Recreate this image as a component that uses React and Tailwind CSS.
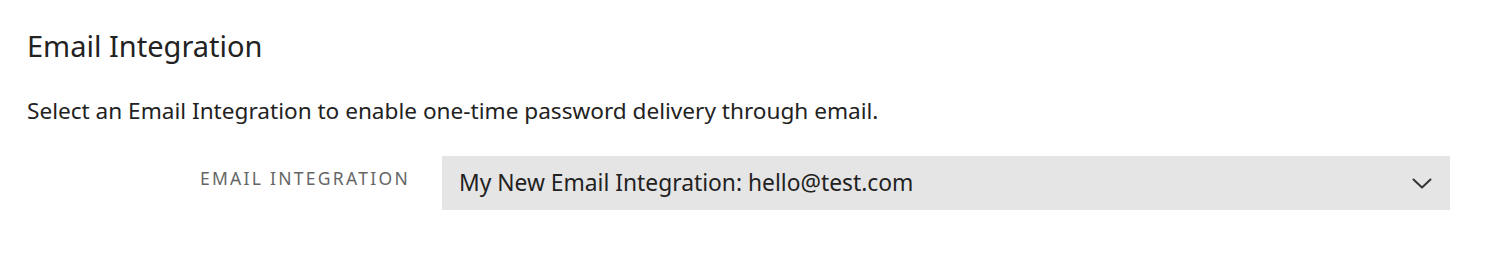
export default function App() {
  return (
    <div className="w-[1498px] h-[262px] bg-white text-[#222]" style={{ fontFamily: '"Noto Sans", sans-serif' }}>
      <div className="pl-[27px] pr-[48px] pt-[28px]">
        <h2 className="text-[29px] leading-[36px] font-normal text-[#222]">Email Integration</h2>
        <p className="mt-[33px] text-[22.6px] leading-[28px] text-[#222]">
          Select an Email Integration to enable one-time password delivery through email.
        </p>
        <div className="mt-[31px] flex items-start">
          <label className="w-[415px] pt-[10px] pr-[32px] text-right text-[17.5px] leading-[24px] tracking-[0.13em] uppercase text-[#666]">
            Email Integration
          </label>
          <button className="flex-1 h-[54px] bg-[#e5e5e5] flex items-center justify-between pl-[17px] pr-[18px] text-left">
            <span className="text-[22.8px] leading-[30px] text-[#222]">My New Email Integration: hello@test.com</span>
            <svg width="20" height="11" viewBox="0 0 20 11" fill="none" stroke="#333" strokeWidth="2" strokeLinecap="round" strokeLinejoin="round">
              <path d="M1.5 1.5L10 9.5L18.5 1.5" />
            </svg>
          </button>
        </div>
      </div>
    </div>
  )
}
